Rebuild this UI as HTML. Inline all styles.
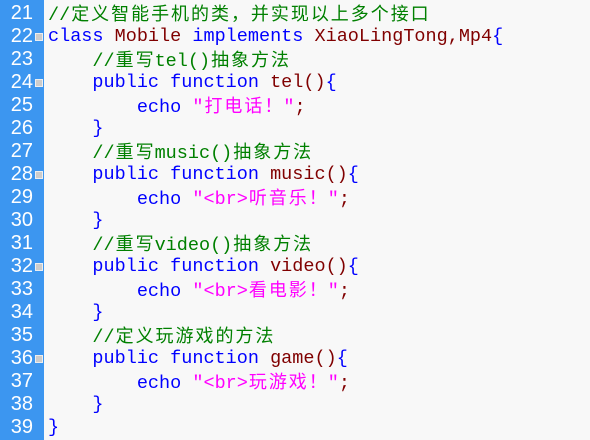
<!DOCTYPE html>
<html><head><meta charset="utf-8"><style>
body{margin:0;width:590px;height:440px;background:#f8f8f8;overflow:hidden;position:relative;font-family:"Liberation Mono","Noto Sans CJK SC",monospace;font-size:18.5px}
.g{position:absolute;left:0;top:0;width:44px;height:440px;background:#3c96f0}
.l{position:absolute;left:0;height:23px;line-height:23px;white-space:pre}
.n{position:absolute;left:0;width:33px;text-align:right;color:#fff;font-family:"Liberation Sans",sans-serif;font-size:20px}
.f{position:absolute;left:35px;top:8px;width:6px;height:6px;border:1px solid #eee;background:#ccc}
.t{position:absolute;left:48px}
.k{color:#0000ff}.r{color:#800000}.c{color:#008000}.s{color:#ff00ff}
i{font-style:normal;display:inline-block;width:2ch;text-align:center;font-family:"Noto Sans CJK SC",sans-serif;font-size:18px}
</style></head><body>
<div class="g"></div>
<div class="l" style="top:2px"><span class="n">21</span><span class="t c">//<i>定</i><i>义</i><i>智</i><i>能</i><i>手</i><i>机</i><i>的</i><i>类</i><i>，</i><i>并</i><i>实</i><i>现</i><i>以</i><i>上</i><i>多</i><i>个</i><i>接</i><i>口</i></span></div>
<div class="l" style="top:25px"><span class="n">22</span><span class="f"></span><span class="t"><span class="k">class</span> <span class="r">Mobile</span> <span class="k">implements</span> <span class="r">XiaoLingTong,Mp4</span><span class="k">{</span></span></div>
<div class="l" style="top:48px"><span class="n">23</span><span class="t c">    //<i>重</i><i>写</i>tel()<i>抽</i><i>象</i><i>方</i><i>法</i></span></div>
<div class="l" style="top:71px"><span class="n">24</span><span class="f"></span><span class="t">    <span class="k">public function</span> <span class="r">tel()</span><span class="k">{</span></span></div>
<div class="l" style="top:94px"><span class="n">25</span><span class="t">        <span class="k">echo</span> <span class="s">"<i>打</i><i>电</i><i>话</i><i>！</i>"</span><span class="r">;</span></span></div>
<div class="l" style="top:117px"><span class="n">26</span><span class="t k">    }</span></div>
<div class="l" style="top:140px"><span class="n">27</span><span class="t c">    //<i>重</i><i>写</i>music()<i>抽</i><i>象</i><i>方</i><i>法</i></span></div>
<div class="l" style="top:163px"><span class="n">28</span><span class="f"></span><span class="t">    <span class="k">public function</span> <span class="r">music()</span><span class="k">{</span></span></div>
<div class="l" style="top:186px"><span class="n">29</span><span class="t">        <span class="k">echo</span> <span class="s">"&lt;br&gt;<i>听</i><i>音</i><i>乐</i><i>！</i>"</span><span class="r">;</span></span></div>
<div class="l" style="top:209px"><span class="n">30</span><span class="t k">    }</span></div>
<div class="l" style="top:232px"><span class="n">31</span><span class="t c">    //<i>重</i><i>写</i>video()<i>抽</i><i>象</i><i>方</i><i>法</i></span></div>
<div class="l" style="top:255px"><span class="n">32</span><span class="f"></span><span class="t">    <span class="k">public function</span> <span class="r">video()</span><span class="k">{</span></span></div>
<div class="l" style="top:278px"><span class="n">33</span><span class="t">        <span class="k">echo</span> <span class="s">"&lt;br&gt;<i>看</i><i>电</i><i>影</i><i>！</i>"</span><span class="r">;</span></span></div>
<div class="l" style="top:301px"><span class="n">34</span><span class="t k">    }</span></div>
<div class="l" style="top:324px"><span class="n">35</span><span class="t c">    //<i>定</i><i>义</i><i>玩</i><i>游</i><i>戏</i><i>的</i><i>方</i><i>法</i></span></div>
<div class="l" style="top:347px"><span class="n">36</span><span class="f"></span><span class="t">    <span class="k">public function</span> <span class="r">game()</span><span class="k">{</span></span></div>
<div class="l" style="top:370px"><span class="n">37</span><span class="t">        <span class="k">echo</span> <span class="s">"&lt;br&gt;<i>玩</i><i>游</i><i>戏</i><i>！</i>"</span><span class="r">;</span></span></div>
<div class="l" style="top:393px"><span class="n">38</span><span class="t k">    }</span></div>
<div class="l" style="top:416px"><span class="n">39</span><span class="t k">}</span></div>
</body></html>
